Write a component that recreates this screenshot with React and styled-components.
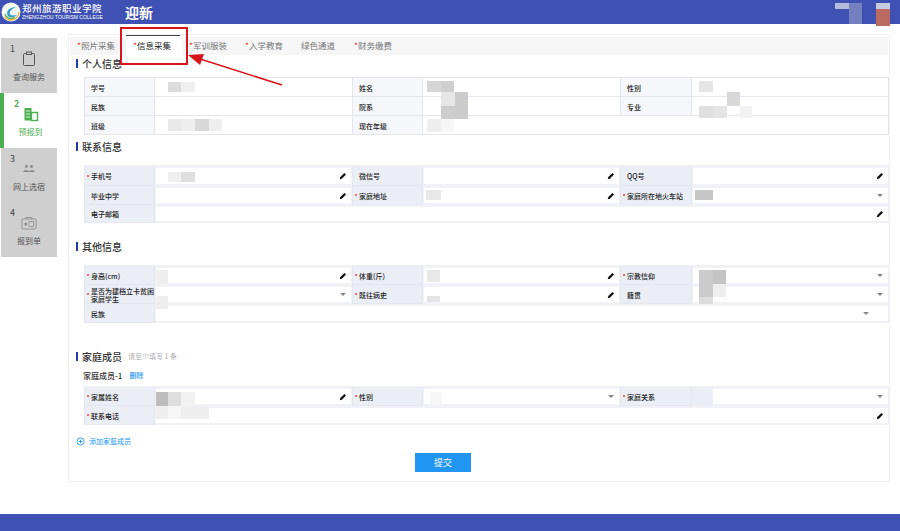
import styled, { createGlobalStyle } from "styled-components"

const GlobalStyle = createGlobalStyle`
  html, body {
    margin: 0;
    height: 100%;
    background: #fff;
    overflow: hidden;
    font-family: "Noto Sans CJK SC", "Liberation Sans", sans-serif;
  }
`

const Page = styled.div`
  position: relative;
  display: flex;
  flex-direction: column;
  width: 900px;
  height: 531px;
  overflow: hidden;
`

const Header = styled.header`
  position: relative;
  display: flex;
  align-items: center;
  height: 24px;
  flex: none;
  background: #3f51b2;
  color: #fff;
`

const Logo = styled.div`
  display: flex;
  align-items: center;
  gap: 1px;
  width: 125px;
  padding-left: 1px;
  box-sizing: border-box;
  flex: none;
`

const LogoText = styled.div`
  display: flex;
  flex-direction: column;
  line-height: 1;
`

const LogoName = styled.span`
  font-family: "Noto Sans CJK SC", serif;
  font-size: 9.5px;
  font-weight: 500;
  letter-spacing: 0.5px;
  white-space: nowrap;
`

const LogoEn = styled.span`
  font-family: "Liberation Sans", sans-serif;
  font-size: 5px;
  margin-top: 1px;
  white-space: nowrap;
`

const HeaderTitle = styled.h1`
  margin: 0;
  font-size: 14px;
  font-weight: 700;
`

const Body = styled.div`
  display: flex;
  flex: 1;
  gap: 11px;
  align-items: flex-start;
  padding-top: 10px;
`

const Sidebar = styled.nav`
  width: 57px;
  flex: none;
  margin-top: 4px;
`

const Step = styled.div`
  display: flex;
  flex-direction: column;
  align-items: center;
  position: relative;
  height: ${(p) => (p.$short ? 54 : 55)}px;
  box-sizing: border-box;
  padding-top: 13px;
  margin-left: ${(p) => (p.$active ? 0 : 1)}px;
  background: ${(p) => (p.$active ? "#fff" : "#cfcfcf")};
  border-left: ${(p) => (p.$active ? "4px solid #4caf50" : "none")};
  color: ${(p) => (p.$active ? "#4caf50" : "#555")};
`

const StepNumber = styled.span`
  position: absolute;
  left: ${(p) => (p.$active ? 10 : 9)}px;
  top: 5px;
  font-size: 9px;
  line-height: 12px;
  font-weight: ${(p) => (p.$active ? 700 : 400)};
  color: ${(p) => (p.$active ? "#4caf50" : "#444")};
`

const StepIcon = styled.svg`
  width: 16px;
  height: 16px;
  display: block;
  fill: none;
  stroke: currentColor;
`

const StepLabel = styled.span`
  margin-top: 4px;
  font-size: 8px;
  line-height: 12px;
  white-space: nowrap;
`

const Panel = styled.main`
  width: 822px;
  height: 448px;
  box-sizing: border-box;
  flex: none;
  border: 1px solid #f0f1f4;
  padding: 2px 0 0 1px;
`

const Tabs = styled.div`
  display: flex;
  height: 18px;
  background: #f6f6f6;
  margin-right: 1px;
`

const Tab = styled.div`
  position: relative;
  width: ${(p) => p.$w || 56}px;
  box-sizing: border-box;
  padding-left: 7px;
  font-size: 8.5px;
  line-height: 16px;
  white-space: nowrap;
  color: ${(p) => (p.$active ? "#222" : "#777")};
  background: ${(p) => (p.$active ? "#fff" : "transparent")};

  ${(p) => p.$active && `
    &::before {
      content: "";
      position: absolute;
      left: 0;
      right: 2px;
      top: -2px;
      height: 1px;
      background: #444;
    }
  `}
`

const Star = styled.span`
  color: #e0483e;
`

const Content = styled.div`
  padding-left: 6px;
`

const SectionTitle = styled.h2`
  display: flex;
  align-items: center;
  gap: 4px;
  height: 14px;
  margin: ${(p) => p.$top}px 0 ${(p) => p.$bottom}px;
  font-size: 10px;
  font-weight: 500;
  color: #333;

  &::before {
    content: "";
    width: 2px;
    height: 9px;
    background: #2438a8;
  }
`

const Hint = styled.span`
  margin-left: 2px;
  font-size: 7px;
  font-weight: 400;
  color: #aaa;
`

const MemberTitle = styled.div`
  display: flex;
  align-items: center;
  gap: 7px;
  height: 12px;
  margin: 6px 0 5px 7px;
  font-size: 8px;
  font-weight: 500;
  color: #333;
`

const DeleteLink = styled.span`
  font-size: 7px;
  color: #2196f3;
`

const Table = styled.div`
  position: relative;
  display: grid;
  grid-template-columns: 71px 197px 71px 197px 72px 197px;
  width: 805px;
  margin-left: 8px;
  border-top: 1px solid ${(p) => (p.$edit ? "#eef0f6" : "#e4e6ea")};
  border-right: 1px solid ${(p) => (p.$edit ? "#eef0f6" : "#e4e6ea")};
  box-sizing: border-box;
`

const Label = styled.div`
  position: relative;
  display: flex;
  align-items: center;
  height: ${(p) => p.$h}px;
  box-sizing: border-box;
  padding: 1px 0 0 6px;
  font-size: 7px;
  line-height: 8px;
  color: #222;
  font-weight: 500;
  background: ${(p) => (p.$edit ? "#eceef6" : "#f5f7fb")};
  border-bottom: 1px solid ${(p) => (p.$edit ? "#e4e7f0" : "#e4e6ea")};
  border-left: 1px solid ${(p) => (p.$edit ? "#e4e7f0" : "#e4e6ea")};
  border-right: 1px solid ${(p) => (p.$edit ? "#e4e7f0" : "#e4e6ea")};

  ${(p) => p.$req && `
    &::before {
      content: "";
      position: absolute;
      left: 2px;
      top: 50%;
      width: 2px;
      height: 2px;
      margin-top: -1px;
      border-radius: 50%;
      background: #e0483e;
    }
  `}
`

const Value = styled.div`
  grid-column: span ${(p) => p.$span || 1};
  height: ${(p) => p.$h}px;
  box-sizing: border-box;
  border-bottom: 1px solid #e4e6ea;
  display: flex;
`

const InputBox = styled.div`
  grid-column: span ${(p) => p.$span || 1};
  display: flex;
  align-items: center;
  justify-content: flex-end;
  height: ${(p) => p.$h}px;
  box-sizing: border-box;
  padding: 0 ${(p) => p.$pad || 4}px 0 0;
  background: #fff;
  border: solid #f0f2f8;
  border-width: 2px 1px;
`

const Pencil = styled.svg`
  width: 8px;
  height: 8px;
  display: block;
`

const Caret = styled.i`
  width: 0;
  height: 0;
  margin-right: 1px;
  border-left: 3px solid transparent;
  border-right: 3px solid transparent;
  border-top: 3px solid #888;
`

const Tile = styled.i`
  position: absolute;
  left: ${(p) => p.$x}px;
  top: ${(p) => p.$y}px;
  width: ${(p) => p.$w}px;
  height: ${(p) => p.$hh}px;
  background: ${(p) => p.$c};
`

const AddRow = styled.div`
  display: flex;
  align-items: center;
  gap: 4px;
  height: 12px;
  margin-top: 10px;
  font-size: 7px;
  color: #2196f3;
`

const AddIcon = styled.svg`
  width: 9px;
  height: 9px;
  fill: none;
  stroke: #2196f3;
`

const Actions = styled.div`
  display: flex;
  justify-content: center;
  margin-top: 6px;
  padding-right: 79px;
`

const SubmitButton = styled.button`
  width: 56px;
  height: 19px;
  padding: 0;
  border: none;
  background: #2196f3;
  color: #fff;
  font: 9px "Noto Sans CJK SC", sans-serif;
`

const Footer = styled.footer`
  height: 17px;
  flex: none;
  background: #3f51b2;
`

const HeaderTile = styled(Tile)`
  z-index: 2;
`

const Callout = styled.div`
  position: absolute;
  left: 120px;
  top: 27px;
  width: 68px;
  height: 38px;
  box-sizing: border-box;
  border: 2px solid #d8151c;
`

const Arrow = styled.svg`
  position: absolute;
  left: 185px;
  top: 48px;
  width: 100px;
  height: 40px;
`

const PencilIcon = () => (
  <Pencil viewBox="0 0 10 10">
    <path d="M1 9l.6-2.6L6.8 1.2l2 2L3.6 8.4z" fill="#111" />
  </Pencil>
)

const Cell = ({ label, req, edit, h, span, kind, pad }) => (
  <>
    <Label $edit={edit} $h={h} $req={req}>
      <span>{label}</span>
    </Label>
    {edit ? (
      <InputBox $h={h} $span={span} $pad={pad}>
        {kind === "select" ? <Caret /> : <PencilIcon />}
      </InputBox>
    ) : (
      <Value $h={h} $span={span} />
    )}
  </>
)

const Tiles = ({ items }) =>
  items.map(([x, y, w, hh, c], i) => (
    <Tile key={i} $x={x} $y={y} $w={w} $hh={hh} $c={c} />
  ))

const steps = [
  {
    n: 1,
    label: "查询服务",
    icon: (
      <>
        <rect x="2.5" y="2.5" width="11" height="12" rx="1" strokeWidth="1" />
        <rect x="5.5" y="1" width="5" height="2.5" fill="#cfcfcf" strokeWidth="1" />
      </>
    ),
  },
  {
    n: 2,
    label: "预报到",
    active: true,
    icon: (
      <>
        <rect x="1.5" y="2" width="7" height="12.5" fill="#4caf50" stroke="none" />
        <rect x="8.5" y="6.5" width="6" height="8" strokeWidth="1.4" />
        <path d="M3 5h4M3 8h4M3 11h4" stroke="#fff" strokeWidth="0.8" />
      </>
    ),
  },
  {
    n: 3,
    label: "网上选宿",
    icon: (
      <>
        <circle cx="5.5" cy="5.5" r="1.4" fill="#888" stroke="none" />
        <circle cx="10.5" cy="5.5" r="1.4" fill="#888" stroke="none" />
        <path d="M2 11c.5-2.5 6-2.5 6.5 0zM8 11c.5-2.5 5.500-2.500 6 0z" fill="#888" stroke="none" />
      </>
    ),
  },
  {
    n: 4,
    label: "报到单",
    icon: (
      <>
        <rect x="1" y="4" width="14" height="10" rx="1" stroke="#888" strokeWidth="0.8" />
        <path d="M5 4V2.500h6V4" stroke="#888" strokeWidth="0.8" />
        <rect x="3.500" y="8" width="2.500" height="2.500" fill="#888" stroke="none" />
        <rect x="8" y="6.500" width="4.500" height="5" stroke="#888" strokeWidth="0.7" />
      </>
    ),
  },
]

const tabs = [
  { t: "照片采集", star: true },
  { t: "信息采集", star: true, active: true },
  { t: "军训服装", star: true },
  { t: "入学教育", star: true },
  { t: "绿色通道", w: 53 },
  { t: "财务缴费", star: true },
]

const App = () => (
  <Page>
    <GlobalStyle />
    <Header>
      <Logo>
        <svg width="20" height="20" viewBox="0 0 20 20">
          <circle cx="10" cy="10" r="9.500" fill="#f4f6f2" />
          <circle cx="10" cy="10" r="8" fill="none" stroke="#e9b13c" strokeWidth="1.300" strokeDasharray="20 40" />
          <path d="M15 5C9 5 4 9 7 14c2 2 6 1.500 9-1-3 .5-6 1-7-1-1-3 2-5 6-7z" fill="#2f9fd0" />
          <path d="M4 12c1 4 6 6 10 3" fill="none" stroke="#57ad54" strokeWidth="1.300" />
        </svg>
        <LogoText>
          <LogoName>郑州旅游职业学院</LogoName>
          <LogoEn>ZHENGZHOU TOURISM COLLEGE</LogoEn>
        </LogoText>
      </Logo>
      <HeaderTitle>迎新</HeaderTitle>
      <HeaderTile $x={835} $y={3} $w={14} $hh={6} $c="#b4bbdc" />
      <HeaderTile $x={849} $y={3} $w={13} $hh={21} $c="#7480c0" />
      <HeaderTile $x={876} $y={3} $w={14} $hh={6} $c="#c6cbe2" />
      <HeaderTile $x={876} $y={9} $w={14} $hh={17} $c="#b96b62" />
    </Header>

    <Body>
      <Sidebar>
        {steps.map((s) => (
          <Step key={s.n} $active={s.active} $short={s.n === 3}>
            <StepNumber $active={s.active}>{s.n}</StepNumber>
            <StepIcon viewBox="0 0 16 16">{s.icon}</StepIcon>
            <StepLabel>{s.label}</StepLabel>
          </Step>
        ))}
      </Sidebar>

      <Panel>
        <Tabs>
          {tabs.map((t) => (
            <Tab key={t.t} $active={t.active} $w={t.w}>
              {t.star && <Star>*</Star>}
              {t.t}
            </Tab>
          ))}
        </Tabs>

        <Content>
          <SectionTitle $top={1} $bottom={7}>个人信息</SectionTitle>
          <Table>
            <Cell label="学号" h={19} />
            <Cell label="姓名" h={19} />
            <Cell label="性别" h={19} />
            <Cell label="民族" h={19} />
            <Cell label="院系" h={19} />
            <Cell label="专业" h={19} />
            <Cell label="班级" h={19} />
            <Cell label="现在年级" h={19} span={3} />
            <Tiles
              items={[
                [84, 4, 13, 10, "#dcdcdc"],
                [97, 4, 14, 10, "#efefef"],
                [84, 41, 14, 12, "#e8e8e8"],
                [98, 41, 13, 12, "#eeeeee"],
                [111, 41, 14, 12, "#d8d8d8"],
                [125, 41, 13, 12, "#eeeeee"],
                [343, 3, 14, 11, "#d6d6d6"],
                [357, 3, 13, 11, "#cfcfcf"],
                [357, 14, 14, 14, "#e6e6e6"],
                [371, 14, 13, 27, "#cccccc"],
                [357, 28, 14, 13, "#cdcdcd"],
                [343, 41, 14, 13, "#eeeeee"],
                [357, 41, 13, 13, "#f6f6f6"],
                [615, 3, 14, 11, "#e6e6e6"],
                [643, 14, 13, 14, "#d8d8d8"],
                [615, 28, 14, 12, "#e0e0e0"],
                [629, 28, 14, 12, "#e4e4e4"],
                [656, 28, 12, 12, "#f2f2f2"],
              ]}
            />
          </Table>

          <SectionTitle $top={4} $bottom={12}>联系信息</SectionTitle>
          <Table $edit>
            <Cell edit req label="手机号" h={20} />
            <Cell edit label="微信号" h={20} />
            <Cell edit label="QQ号" h={20} />
            <Cell edit label="毕业中学" h={19} />
            <Cell edit req label="家庭地址" h={19} />
            <Cell edit req label="家庭所在地火车站" h={19} kind="select" />
            <Cell edit label="电子邮箱" h={18} span={5} />
            <Tiles
              items={[
                [84, 6, 13, 10, "#eeeeee"],
                [97, 6, 14, 10, "#dedede"],
                [342, 24, 15, 10, "#e8e8e8"],
                [611, 24, 18, 10, "#c6c6c6"],
              ]}
            />
          </Table>

          <SectionTitle $top={16} $bottom={12}>其他信息</SectionTitle>
          <Table $edit>
            <Cell edit req label="身高(cm)" h={19} />
            <Cell edit req label="体重(斤)" h={19} />
            <Cell edit req label="宗教信仰" h={19} kind="select" />
            <Cell edit req label="是否为建档立卡贫困家庭学生" h={19} kind="select" />
            <Cell edit req label="既往病史" h={19} />
            <Cell edit label="籍贯" h={19} kind="select" />
            <Cell edit label="民族" h={19} span={5} kind="select" pad={18} />
            <Tiles
              items={[
                [72, 4, 12, 14, "#eeeeee"],
                [343, 4, 13, 12, "#e8e8e8"],
                [615, 4, 14, 14, "#cbcbcb"],
                [629, 4, 13, 14, "#c4c4c4"],
                [615, 18, 14, 13, "#cbcbcb"],
                [629, 18, 13, 13, "#eeeeee"],
                [615, 31, 14, 7, "#dcdcdc"],
                [72, 30, 12, 13, "#eeeeee"],
                [343, 30, 13, 6, "#e4e4e4"],
              ]}
            />
          </Table>

          <SectionTitle $top={26} $bottom={0}>
            家庭成员
            <Hint>请至少填写 1 条</Hint>
          </SectionTitle>
          <MemberTitle>
            家庭成员-1
            <DeleteLink>删除</DeleteLink>
          </MemberTitle>
          <Table $edit>
            <Cell edit req label="家属姓名" h={19} />
            <Cell edit req label="性别" h={19} kind="select" />
            <Cell edit req label="家庭关系" h={19} kind="select" />
            <Cell edit req label="联系电话" h={19} span={5} />
            <Tiles
              items={[
                [72, 5, 12, 14, "#bdbdbd"],
                [84, 5, 13, 14, "#dedede"],
                [97, 5, 14, 14, "#f1f1f1"],
                [72, 19, 12, 13, "#eeeeee"],
                [84, 19, 13, 13, "#f6f6f6"],
                [97, 19, 28, 13, "#eeeeee"],
                [346, 5, 12, 13, "#f7f7f7"],
                [608, 0, 21, 19, "#eceef6"],
              ]}
            />
          </Table>

          <AddRow>
            <AddIcon viewBox="0 0 10 10">
              <circle cx="5" cy="5" r="4" strokeWidth="1" />
              <path d="M3 5h4M5 3v4" strokeWidth="1" />
            </AddIcon>
            添加家庭成员
          </AddRow>
          <Actions>
            <SubmitButton>提交</SubmitButton>
          </Actions>
        </Content>
      </Panel>
    </Body>

    <Footer />

    <Callout />
    <Arrow viewBox="0 0 100 40">
      <path d="M97 37L12 10" stroke="#d8151c" strokeWidth="1.500" fill="none" />
      <path d="M3 7l16-1-4 11z" fill="#d8151c" />
    </Arrow>
  </Page>
)

export default App
